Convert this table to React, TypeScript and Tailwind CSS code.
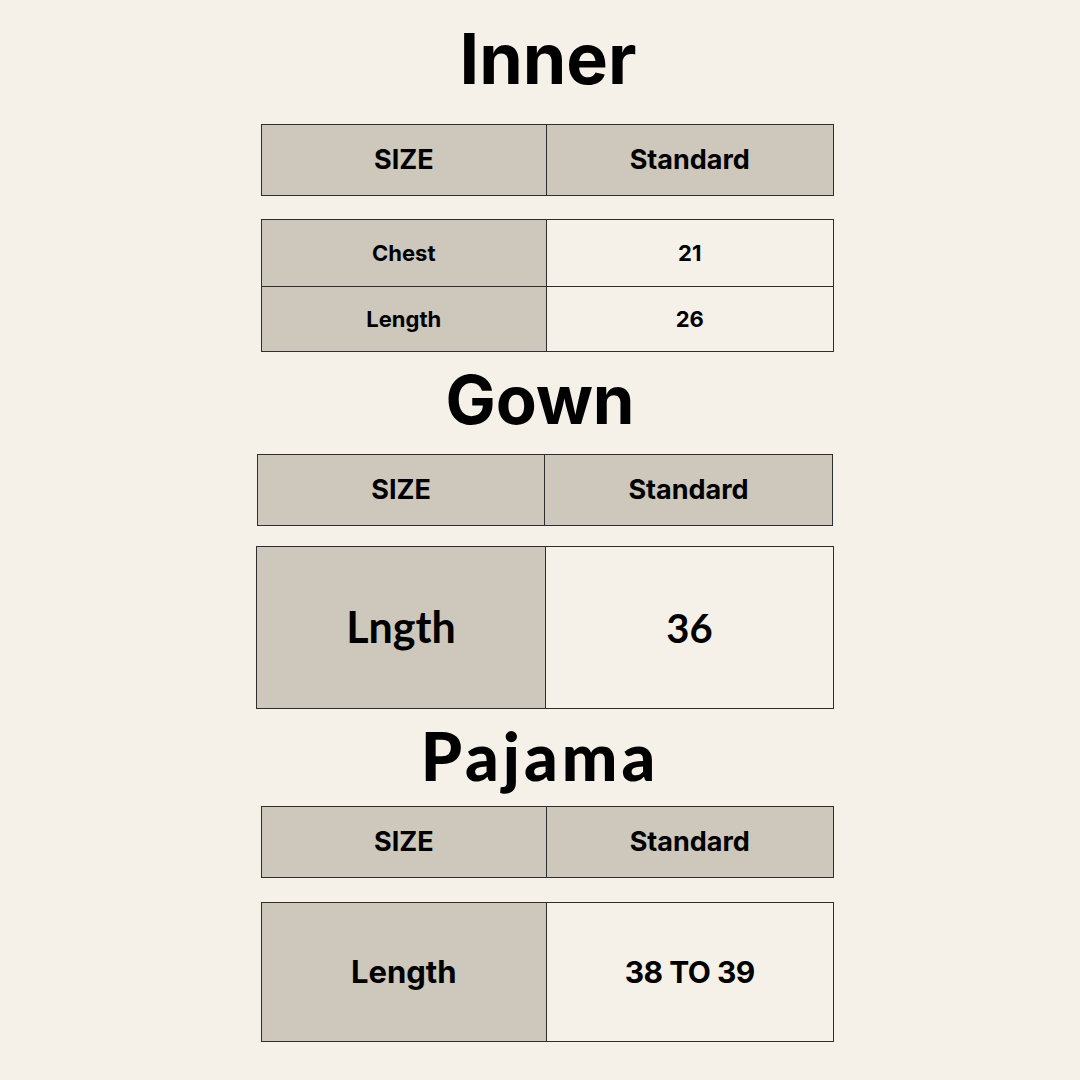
const inter = { fontFamily: 'Inter, "Liberation Sans", sans-serif' };
const lato = { fontFamily: 'Lato, "Liberation Sans", sans-serif' };

function Cell({ children, gray, className = '' }: { children: React.ReactNode; gray?: boolean; className?: string }) {
  return (
    <div className={`flex items-center justify-center ${gray ? 'bg-[#cdc7bc]' : 'bg-[#f5f1e8]'} ${className}`}>
      {children}
    </div>
  );
}

function HeaderRow({ w = 'w-[573px]' }: { w?: string }) {
  return (
    <div className={`${w} h-[72px] grid grid-cols-2 border border-[#2e2e2e]`}>
      <Cell gray className="border-r border-[#2e2e2e]">
        <span className="text-[27px] font-bold text-black">SIZE</span>
      </Cell>
      <Cell gray>
        <span className="text-[27px] font-bold text-black">Standard</span>
      </Cell>
    </div>
  );
}

export default function App() {
  return (
    <div className="w-[1080px] h-[1080px] bg-[#f5f1e8] flex flex-col items-center" style={inter}>
      <h1 className="mt-[23px] ml-[16px] text-[70px] leading-[72px] font-bold text-black">Inner</h1>

      <div className="mt-[29px] ml-[14px]">
        <HeaderRow />
      </div>

      <div className="mt-[23px] ml-[14px] w-[573px] border border-[#2e2e2e]">
        <div className="h-[66px] grid grid-cols-2">
          <Cell gray className="border-r border-[#2e2e2e]">
            <span className="text-[22px] font-bold">Chest</span>
          </Cell>
          <Cell>
            <span className="text-[22px] font-bold">21</span>
          </Cell>
        </div>
        <div className="h-[65px] grid grid-cols-2 border-t border-[#2e2e2e]">
          <Cell gray className="border-r border-[#2e2e2e]">
            <span className="text-[22px] font-bold">Length</span>
          </Cell>
          <Cell>
            <span className="text-[22px] font-bold">26</span>
          </Cell>
        </div>
      </div>

      <h2 className="mt-[12px] text-[67px] leading-[72px] font-bold text-black">Gown</h2>

      <div className="mt-[18px] ml-[10px]">
        <HeaderRow w="w-[576px]" />
      </div>

      <div className="mt-[20px] ml-[10px] w-[578px] h-[163px] grid grid-cols-[289px_1fr] border border-[#2e2e2e]" style={lato}>
        <Cell gray className="border-r border-[#2e2e2e]">
          <span className="text-[43px] font-bold">Lngth</span>
        </Cell>
        <Cell>
          <span className="text-[40px] font-bold">36</span>
        </Cell>
      </div>

      <h2 className="mt-[11px] text-[66px] leading-[72px] font-black tracking-[4px] text-black" style={lato}>Pajama</h2>

      <div className="mt-[14px] ml-[14px]">
        <HeaderRow />
      </div>

      <div className="mt-[24px] ml-[14px] w-[573px] h-[140px] grid grid-cols-2 border border-[#2e2e2e]">
        <Cell gray className="border-r border-[#2e2e2e]">
          <span className="text-[31px] font-bold">Length</span>
        </Cell>
        <Cell>
          <span className="text-[30px] font-bold tracking-[-0.5px]">38 TO 39</span>
        </Cell>
      </div>
    </div>
  );
}
